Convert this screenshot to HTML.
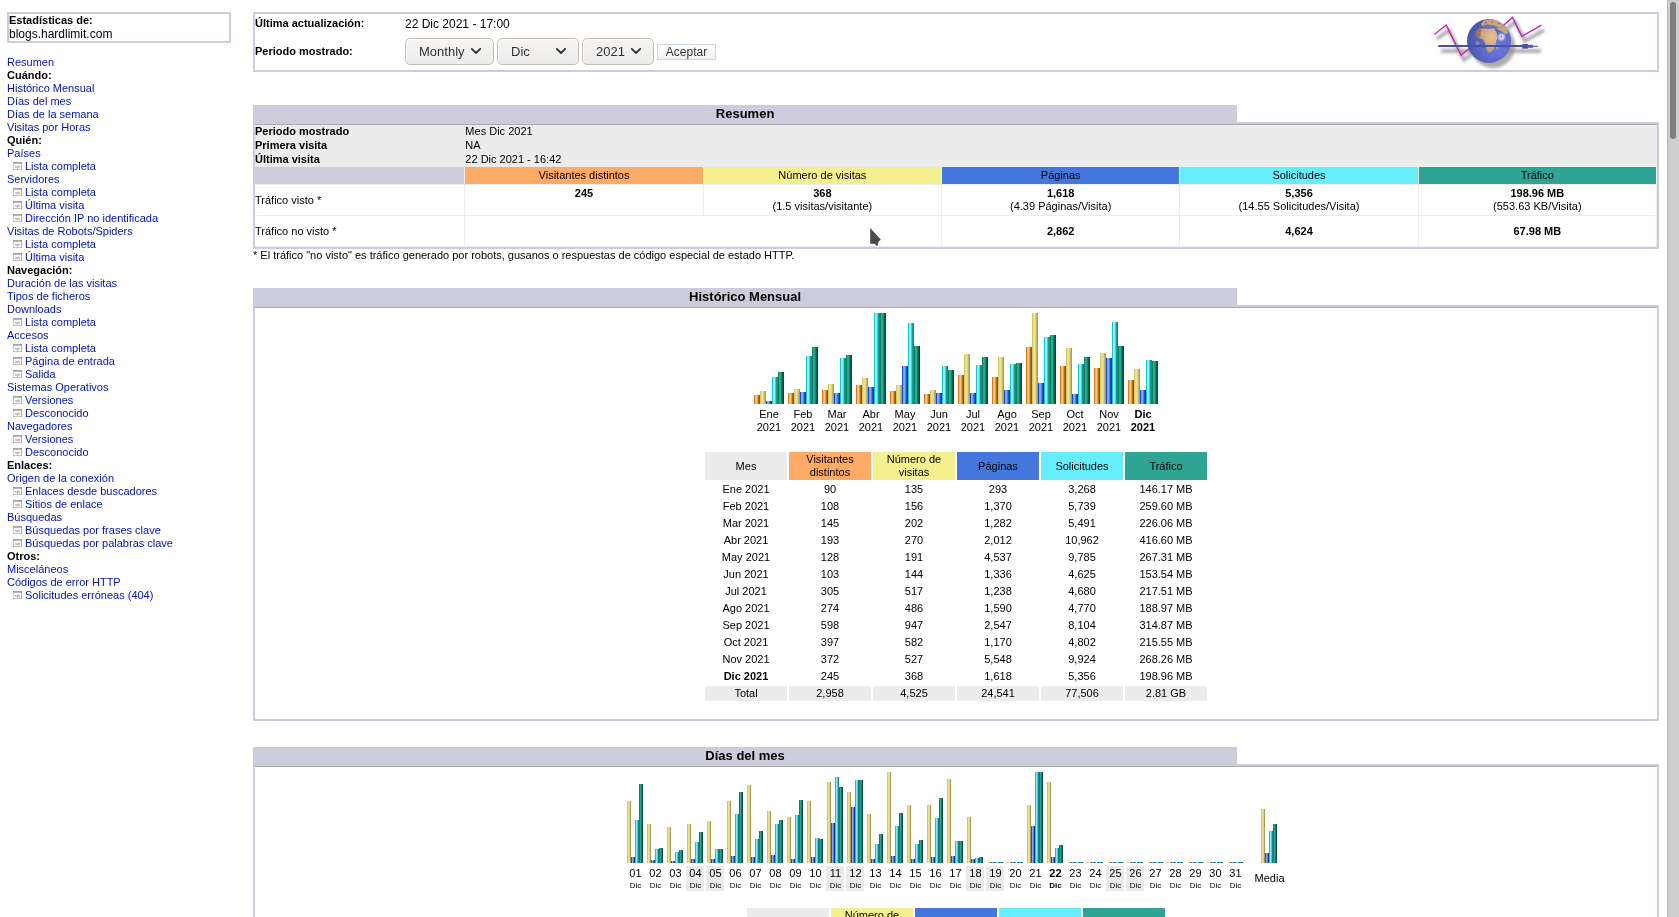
<!DOCTYPE html>
<html><head><meta charset="utf-8"><title>Estadísticas de blogs.hardlimit.com</title>
<style>
html,body{margin:0;padding:0;background:#fff;overflow:hidden;width:1679px;height:917px;font:11px/13px "Liberation Sans",sans-serif}
*{font-family:"Liberation Sans",sans-serif}
#left{position:absolute;left:0;top:0;width:239px;height:917px;overflow:hidden;will-change:transform}
#main{position:absolute;left:245px;top:0;width:1422px;height:917px;overflow:hidden;will-change:transform}
.bodyl{padding:0 8px}
#sb{position:absolute;left:1667px;top:0;width:12px;height:917px;background:#cecece;border-left:1px solid #bdb6b1;box-sizing:border-box}
#thumb{position:absolute;left:2px;top:2px;width:6px;height:137px;background:#7b7f80;border-radius:3px}
table{border-collapse:separate}
td{border-color:#ECECEC;border-left-width:0;border-right-width:1px;border-top-width:0;border-bottom-width:1px;font:11px/13px "Liberation Sans",sans-serif;text-align:center;color:#000}
td.aws{text-align:left;padding:0}
td.awsm{text-align:left;padding:0;border-width:0}
.aws_border{border-collapse:collapse;background-color:#CCCCDD;padding:1px;margin:0}
.aws_title{font:bold 13px/15px "Liberation Sans",sans-serif;background-color:#CCCCDD;text-align:center;padding:1px;color:#000}
.aws_blank{font:13px/15px "Liberation Sans",sans-serif;background-color:#FFFFFF;text-align:center;padding:1px}
.aws_data{background-color:#fff;border-top:1px solid #ababab}
a{font:11px/13px "Liberation Sans",sans-serif;color:#0011BB;text-decoration:none}
b{font-weight:bold}
i.bu,i.bv,i.bp,i.bh,i.bk{display:inline-block;vertical-align:bottom;width:6px}
.d i{width:4px!important}
i.bu{background:linear-gradient(90deg,#d87c10 0 16.6%,#f8b868 16.6% 33.3%,#f0c890 33.3% 50%,#d8a060 50% 66.6%,#b86818 66.6% 83.3%,#a05000 83.3%)}
i.bv{background:linear-gradient(90deg,#d4c858 0 16.6%,#ecdf88 16.6% 33.3%,#e8e2a0 33.3% 50%,#dcd490 50% 66.6%,#c8b860 66.6% 83.3%,#b09c48 83.3%)}
i.bp{background:linear-gradient(90deg,#1050d8 0 16.6%,#70a8f8 16.6% 33.3%,#88a8f0 33.3% 50%,#5080e0 50% 66.6%,#2050c0 66.6% 83.3%,#0838a0 83.3%)}
i.bh{background:linear-gradient(90deg,#10c8d0 0 16.6%,#78fcf8 16.6% 33.3%,#98e8ec 33.3% 50%,#58c8d0 50% 66.6%,#10a0a8 66.6% 83.3%,#088890 83.3%)}
i.bk{background:linear-gradient(90deg,#088850 0 16.6%,#20b090 16.6% 33.3%,#30a098 33.3% 50%,#188070 50% 66.6%,#006848 66.6% 83.3%,#005030 83.3%)}
tr.br td{line-height:0;font-size:0}
.sel{position:absolute;top:24px;height:27px;box-sizing:border-box;border:1px solid #c6bfb8;border-radius:5px;box-shadow:inset 1px 1px 0 #fdfdfd;background:linear-gradient(#f6f5f4,#edebe9);font:13px "Liberation Sans",sans-serif;color:#2e3436}
.sel span{position:absolute;top:5px}
.sel svg{position:absolute;top:9px}
.btn{position:absolute;left:412px;top:30px;width:59px;height:16px;box-sizing:border-box;border:1px solid #ccd7e0;background:linear-gradient(#fff,#eef1f4);font:12px "Liberation Sans",sans-serif;color:#333;text-align:center;line-height:14px}
.pg{display:inline-block;width:9px;height:8px;vertical-align:0;margin:0 3px 0 6px}
</style></head><body>

<div id="left"><div class="bodyl" style="padding-left:7px;padding-right:8px">
<div style="height:12px"></div>
<table class="aws_border" border="0" cellpadding="2" cellspacing="0" width="100%"><tr><td style="padding:2px;border:0">
<table class="aws_data" border="0" cellpadding="1" cellspacing="0" width="100%" style="border-top:0"><tr><td class="awsm"><b>Estadísticas de:</b></td></tr><tr><td class="awsm" style="line-height:14px"><span style="font-size:12px">blogs.hardlimit.com</span></td></tr></table>
</td></tr></table>
<div style="height:13px"></div>
<table width="100%" cellpadding="0" cellspacing="0" border="0">
<tr><td class="awsm" style="height:13px;line-height:13px;white-space:nowrap"><a>Resumen</a></td></tr>
<tr><td class="awsm" style="height:13px;line-height:13px;white-space:nowrap"><b>Cuándo:</b></td></tr>
<tr><td class="awsm" style="height:13px;line-height:13px;white-space:nowrap"><a>Histórico Mensual</a></td></tr>
<tr><td class="awsm" style="height:13px;line-height:13px;white-space:nowrap"><a>Días del mes</a></td></tr>
<tr><td class="awsm" style="height:13px;line-height:13px;white-space:nowrap"><a>Días de la semana</a></td></tr>
<tr><td class="awsm" style="height:13px;line-height:13px;white-space:nowrap"><a>Visitas por Horas</a></td></tr>
<tr><td class="awsm" style="height:13px;line-height:13px;white-space:nowrap"><b>Quién:</b></td></tr>
<tr><td class="awsm" style="height:13px;line-height:13px;white-space:nowrap"><a>Países</a></td></tr>
<tr><td class="awsm" style="height:13px;line-height:13px;white-space:nowrap"><svg class="pg" width="9" height="8" viewBox="0 0 9 8" shape-rendering="crispEdges"><rect x="0" y="0" width="9" height="8" fill="#fff"/><rect x="0" y="0" width="9" height="1" fill="#a4a4a4"/><rect x="0" y="1" width="9" height="1" fill="#b8b8b8"/><rect x="0" y="0" width="1" height="1" fill="#8c8c8c"/><rect x="8" y="0" width="1" height="1" fill="#8c8c8c"/><rect x="8" y="1" width="1" height="1" fill="#a0a0a0"/><rect x="0" y="2" width="1" height="5" fill="#cecece"/><rect x="8" y="2" width="1" height="5" fill="#b4b4b4"/><rect x="0" y="7" width="9" height="1" fill="#c4c4c4"/><rect x="0" y="7" width="1" height="1" fill="#a8a8a8"/><rect x="8" y="7" width="1" height="1" fill="#a0a0a0"/><rect x="5" y="3" width="1" height="1" fill="#c8c8c8"/><rect x="2" y="4" width="5" height="1" fill="#c4c4c4"/><rect x="2" y="5" width="5" height="1" fill="#c8c8c8"/><rect x="4" y="6" width="1" height="1" fill="#c8c8c8"/></svg><a>Lista completa</a></td></tr>
<tr><td class="awsm" style="height:13px;line-height:13px;white-space:nowrap"><a>Servidores</a></td></tr>
<tr><td class="awsm" style="height:13px;line-height:13px;white-space:nowrap"><svg class="pg" width="9" height="8" viewBox="0 0 9 8" shape-rendering="crispEdges"><rect x="0" y="0" width="9" height="8" fill="#fff"/><rect x="0" y="0" width="9" height="1" fill="#a4a4a4"/><rect x="0" y="1" width="9" height="1" fill="#b8b8b8"/><rect x="0" y="0" width="1" height="1" fill="#8c8c8c"/><rect x="8" y="0" width="1" height="1" fill="#8c8c8c"/><rect x="8" y="1" width="1" height="1" fill="#a0a0a0"/><rect x="0" y="2" width="1" height="5" fill="#cecece"/><rect x="8" y="2" width="1" height="5" fill="#b4b4b4"/><rect x="0" y="7" width="9" height="1" fill="#c4c4c4"/><rect x="0" y="7" width="1" height="1" fill="#a8a8a8"/><rect x="8" y="7" width="1" height="1" fill="#a0a0a0"/><rect x="5" y="3" width="1" height="1" fill="#c8c8c8"/><rect x="2" y="4" width="5" height="1" fill="#c4c4c4"/><rect x="2" y="5" width="5" height="1" fill="#c8c8c8"/><rect x="4" y="6" width="1" height="1" fill="#c8c8c8"/></svg><a>Lista completa</a></td></tr>
<tr><td class="awsm" style="height:13px;line-height:13px;white-space:nowrap"><svg class="pg" width="9" height="8" viewBox="0 0 9 8" shape-rendering="crispEdges"><rect x="0" y="0" width="9" height="8" fill="#fff"/><rect x="0" y="0" width="9" height="1" fill="#a4a4a4"/><rect x="0" y="1" width="9" height="1" fill="#b8b8b8"/><rect x="0" y="0" width="1" height="1" fill="#8c8c8c"/><rect x="8" y="0" width="1" height="1" fill="#8c8c8c"/><rect x="8" y="1" width="1" height="1" fill="#a0a0a0"/><rect x="0" y="2" width="1" height="5" fill="#cecece"/><rect x="8" y="2" width="1" height="5" fill="#b4b4b4"/><rect x="0" y="7" width="9" height="1" fill="#c4c4c4"/><rect x="0" y="7" width="1" height="1" fill="#a8a8a8"/><rect x="8" y="7" width="1" height="1" fill="#a0a0a0"/><rect x="5" y="3" width="1" height="1" fill="#c8c8c8"/><rect x="2" y="4" width="5" height="1" fill="#c4c4c4"/><rect x="2" y="5" width="5" height="1" fill="#c8c8c8"/><rect x="4" y="6" width="1" height="1" fill="#c8c8c8"/></svg><a>Última visita</a></td></tr>
<tr><td class="awsm" style="height:13px;line-height:13px;white-space:nowrap"><svg class="pg" width="9" height="8" viewBox="0 0 9 8" shape-rendering="crispEdges"><rect x="0" y="0" width="9" height="8" fill="#fff"/><rect x="0" y="0" width="9" height="1" fill="#a4a4a4"/><rect x="0" y="1" width="9" height="1" fill="#b8b8b8"/><rect x="0" y="0" width="1" height="1" fill="#8c8c8c"/><rect x="8" y="0" width="1" height="1" fill="#8c8c8c"/><rect x="8" y="1" width="1" height="1" fill="#a0a0a0"/><rect x="0" y="2" width="1" height="5" fill="#cecece"/><rect x="8" y="2" width="1" height="5" fill="#b4b4b4"/><rect x="0" y="7" width="9" height="1" fill="#c4c4c4"/><rect x="0" y="7" width="1" height="1" fill="#a8a8a8"/><rect x="8" y="7" width="1" height="1" fill="#a0a0a0"/><rect x="5" y="3" width="1" height="1" fill="#c8c8c8"/><rect x="2" y="4" width="5" height="1" fill="#c4c4c4"/><rect x="2" y="5" width="5" height="1" fill="#c8c8c8"/><rect x="4" y="6" width="1" height="1" fill="#c8c8c8"/></svg><a>Dirección IP no identificada</a></td></tr>
<tr><td class="awsm" style="height:13px;line-height:13px;white-space:nowrap"><a>Visitas de Robots/Spiders</a></td></tr>
<tr><td class="awsm" style="height:13px;line-height:13px;white-space:nowrap"><svg class="pg" width="9" height="8" viewBox="0 0 9 8" shape-rendering="crispEdges"><rect x="0" y="0" width="9" height="8" fill="#fff"/><rect x="0" y="0" width="9" height="1" fill="#a4a4a4"/><rect x="0" y="1" width="9" height="1" fill="#b8b8b8"/><rect x="0" y="0" width="1" height="1" fill="#8c8c8c"/><rect x="8" y="0" width="1" height="1" fill="#8c8c8c"/><rect x="8" y="1" width="1" height="1" fill="#a0a0a0"/><rect x="0" y="2" width="1" height="5" fill="#cecece"/><rect x="8" y="2" width="1" height="5" fill="#b4b4b4"/><rect x="0" y="7" width="9" height="1" fill="#c4c4c4"/><rect x="0" y="7" width="1" height="1" fill="#a8a8a8"/><rect x="8" y="7" width="1" height="1" fill="#a0a0a0"/><rect x="5" y="3" width="1" height="1" fill="#c8c8c8"/><rect x="2" y="4" width="5" height="1" fill="#c4c4c4"/><rect x="2" y="5" width="5" height="1" fill="#c8c8c8"/><rect x="4" y="6" width="1" height="1" fill="#c8c8c8"/></svg><a>Lista completa</a></td></tr>
<tr><td class="awsm" style="height:13px;line-height:13px;white-space:nowrap"><svg class="pg" width="9" height="8" viewBox="0 0 9 8" shape-rendering="crispEdges"><rect x="0" y="0" width="9" height="8" fill="#fff"/><rect x="0" y="0" width="9" height="1" fill="#a4a4a4"/><rect x="0" y="1" width="9" height="1" fill="#b8b8b8"/><rect x="0" y="0" width="1" height="1" fill="#8c8c8c"/><rect x="8" y="0" width="1" height="1" fill="#8c8c8c"/><rect x="8" y="1" width="1" height="1" fill="#a0a0a0"/><rect x="0" y="2" width="1" height="5" fill="#cecece"/><rect x="8" y="2" width="1" height="5" fill="#b4b4b4"/><rect x="0" y="7" width="9" height="1" fill="#c4c4c4"/><rect x="0" y="7" width="1" height="1" fill="#a8a8a8"/><rect x="8" y="7" width="1" height="1" fill="#a0a0a0"/><rect x="5" y="3" width="1" height="1" fill="#c8c8c8"/><rect x="2" y="4" width="5" height="1" fill="#c4c4c4"/><rect x="2" y="5" width="5" height="1" fill="#c8c8c8"/><rect x="4" y="6" width="1" height="1" fill="#c8c8c8"/></svg><a>Última visita</a></td></tr>
<tr><td class="awsm" style="height:13px;line-height:13px;white-space:nowrap"><b>Navegación:</b></td></tr>
<tr><td class="awsm" style="height:13px;line-height:13px;white-space:nowrap"><a>Duración de las visitas</a></td></tr>
<tr><td class="awsm" style="height:13px;line-height:13px;white-space:nowrap"><a>Tipos de ficheros</a></td></tr>
<tr><td class="awsm" style="height:13px;line-height:13px;white-space:nowrap"><a>Downloads</a></td></tr>
<tr><td class="awsm" style="height:13px;line-height:13px;white-space:nowrap"><svg class="pg" width="9" height="8" viewBox="0 0 9 8" shape-rendering="crispEdges"><rect x="0" y="0" width="9" height="8" fill="#fff"/><rect x="0" y="0" width="9" height="1" fill="#a4a4a4"/><rect x="0" y="1" width="9" height="1" fill="#b8b8b8"/><rect x="0" y="0" width="1" height="1" fill="#8c8c8c"/><rect x="8" y="0" width="1" height="1" fill="#8c8c8c"/><rect x="8" y="1" width="1" height="1" fill="#a0a0a0"/><rect x="0" y="2" width="1" height="5" fill="#cecece"/><rect x="8" y="2" width="1" height="5" fill="#b4b4b4"/><rect x="0" y="7" width="9" height="1" fill="#c4c4c4"/><rect x="0" y="7" width="1" height="1" fill="#a8a8a8"/><rect x="8" y="7" width="1" height="1" fill="#a0a0a0"/><rect x="5" y="3" width="1" height="1" fill="#c8c8c8"/><rect x="2" y="4" width="5" height="1" fill="#c4c4c4"/><rect x="2" y="5" width="5" height="1" fill="#c8c8c8"/><rect x="4" y="6" width="1" height="1" fill="#c8c8c8"/></svg><a>Lista completa</a></td></tr>
<tr><td class="awsm" style="height:13px;line-height:13px;white-space:nowrap"><a>Accesos</a></td></tr>
<tr><td class="awsm" style="height:13px;line-height:13px;white-space:nowrap"><svg class="pg" width="9" height="8" viewBox="0 0 9 8" shape-rendering="crispEdges"><rect x="0" y="0" width="9" height="8" fill="#fff"/><rect x="0" y="0" width="9" height="1" fill="#a4a4a4"/><rect x="0" y="1" width="9" height="1" fill="#b8b8b8"/><rect x="0" y="0" width="1" height="1" fill="#8c8c8c"/><rect x="8" y="0" width="1" height="1" fill="#8c8c8c"/><rect x="8" y="1" width="1" height="1" fill="#a0a0a0"/><rect x="0" y="2" width="1" height="5" fill="#cecece"/><rect x="8" y="2" width="1" height="5" fill="#b4b4b4"/><rect x="0" y="7" width="9" height="1" fill="#c4c4c4"/><rect x="0" y="7" width="1" height="1" fill="#a8a8a8"/><rect x="8" y="7" width="1" height="1" fill="#a0a0a0"/><rect x="5" y="3" width="1" height="1" fill="#c8c8c8"/><rect x="2" y="4" width="5" height="1" fill="#c4c4c4"/><rect x="2" y="5" width="5" height="1" fill="#c8c8c8"/><rect x="4" y="6" width="1" height="1" fill="#c8c8c8"/></svg><a>Lista completa</a></td></tr>
<tr><td class="awsm" style="height:13px;line-height:13px;white-space:nowrap"><svg class="pg" width="9" height="8" viewBox="0 0 9 8" shape-rendering="crispEdges"><rect x="0" y="0" width="9" height="8" fill="#fff"/><rect x="0" y="0" width="9" height="1" fill="#a4a4a4"/><rect x="0" y="1" width="9" height="1" fill="#b8b8b8"/><rect x="0" y="0" width="1" height="1" fill="#8c8c8c"/><rect x="8" y="0" width="1" height="1" fill="#8c8c8c"/><rect x="8" y="1" width="1" height="1" fill="#a0a0a0"/><rect x="0" y="2" width="1" height="5" fill="#cecece"/><rect x="8" y="2" width="1" height="5" fill="#b4b4b4"/><rect x="0" y="7" width="9" height="1" fill="#c4c4c4"/><rect x="0" y="7" width="1" height="1" fill="#a8a8a8"/><rect x="8" y="7" width="1" height="1" fill="#a0a0a0"/><rect x="5" y="3" width="1" height="1" fill="#c8c8c8"/><rect x="2" y="4" width="5" height="1" fill="#c4c4c4"/><rect x="2" y="5" width="5" height="1" fill="#c8c8c8"/><rect x="4" y="6" width="1" height="1" fill="#c8c8c8"/></svg><a>Página de entrada</a></td></tr>
<tr><td class="awsm" style="height:13px;line-height:13px;white-space:nowrap"><svg class="pg" width="9" height="8" viewBox="0 0 9 8" shape-rendering="crispEdges"><rect x="0" y="0" width="9" height="8" fill="#fff"/><rect x="0" y="0" width="9" height="1" fill="#a4a4a4"/><rect x="0" y="1" width="9" height="1" fill="#b8b8b8"/><rect x="0" y="0" width="1" height="1" fill="#8c8c8c"/><rect x="8" y="0" width="1" height="1" fill="#8c8c8c"/><rect x="8" y="1" width="1" height="1" fill="#a0a0a0"/><rect x="0" y="2" width="1" height="5" fill="#cecece"/><rect x="8" y="2" width="1" height="5" fill="#b4b4b4"/><rect x="0" y="7" width="9" height="1" fill="#c4c4c4"/><rect x="0" y="7" width="1" height="1" fill="#a8a8a8"/><rect x="8" y="7" width="1" height="1" fill="#a0a0a0"/><rect x="5" y="3" width="1" height="1" fill="#c8c8c8"/><rect x="2" y="4" width="5" height="1" fill="#c4c4c4"/><rect x="2" y="5" width="5" height="1" fill="#c8c8c8"/><rect x="4" y="6" width="1" height="1" fill="#c8c8c8"/></svg><a>Salida</a></td></tr>
<tr><td class="awsm" style="height:13px;line-height:13px;white-space:nowrap"><a>Sistemas Operativos</a></td></tr>
<tr><td class="awsm" style="height:13px;line-height:13px;white-space:nowrap"><svg class="pg" width="9" height="8" viewBox="0 0 9 8" shape-rendering="crispEdges"><rect x="0" y="0" width="9" height="8" fill="#fff"/><rect x="0" y="0" width="9" height="1" fill="#a4a4a4"/><rect x="0" y="1" width="9" height="1" fill="#b8b8b8"/><rect x="0" y="0" width="1" height="1" fill="#8c8c8c"/><rect x="8" y="0" width="1" height="1" fill="#8c8c8c"/><rect x="8" y="1" width="1" height="1" fill="#a0a0a0"/><rect x="0" y="2" width="1" height="5" fill="#cecece"/><rect x="8" y="2" width="1" height="5" fill="#b4b4b4"/><rect x="0" y="7" width="9" height="1" fill="#c4c4c4"/><rect x="0" y="7" width="1" height="1" fill="#a8a8a8"/><rect x="8" y="7" width="1" height="1" fill="#a0a0a0"/><rect x="5" y="3" width="1" height="1" fill="#c8c8c8"/><rect x="2" y="4" width="5" height="1" fill="#c4c4c4"/><rect x="2" y="5" width="5" height="1" fill="#c8c8c8"/><rect x="4" y="6" width="1" height="1" fill="#c8c8c8"/></svg><a>Versiones</a></td></tr>
<tr><td class="awsm" style="height:13px;line-height:13px;white-space:nowrap"><svg class="pg" width="9" height="8" viewBox="0 0 9 8" shape-rendering="crispEdges"><rect x="0" y="0" width="9" height="8" fill="#fff"/><rect x="0" y="0" width="9" height="1" fill="#a4a4a4"/><rect x="0" y="1" width="9" height="1" fill="#b8b8b8"/><rect x="0" y="0" width="1" height="1" fill="#8c8c8c"/><rect x="8" y="0" width="1" height="1" fill="#8c8c8c"/><rect x="8" y="1" width="1" height="1" fill="#a0a0a0"/><rect x="0" y="2" width="1" height="5" fill="#cecece"/><rect x="8" y="2" width="1" height="5" fill="#b4b4b4"/><rect x="0" y="7" width="9" height="1" fill="#c4c4c4"/><rect x="0" y="7" width="1" height="1" fill="#a8a8a8"/><rect x="8" y="7" width="1" height="1" fill="#a0a0a0"/><rect x="5" y="3" width="1" height="1" fill="#c8c8c8"/><rect x="2" y="4" width="5" height="1" fill="#c4c4c4"/><rect x="2" y="5" width="5" height="1" fill="#c8c8c8"/><rect x="4" y="6" width="1" height="1" fill="#c8c8c8"/></svg><a>Desconocido</a></td></tr>
<tr><td class="awsm" style="height:13px;line-height:13px;white-space:nowrap"><a>Navegadores</a></td></tr>
<tr><td class="awsm" style="height:13px;line-height:13px;white-space:nowrap"><svg class="pg" width="9" height="8" viewBox="0 0 9 8" shape-rendering="crispEdges"><rect x="0" y="0" width="9" height="8" fill="#fff"/><rect x="0" y="0" width="9" height="1" fill="#a4a4a4"/><rect x="0" y="1" width="9" height="1" fill="#b8b8b8"/><rect x="0" y="0" width="1" height="1" fill="#8c8c8c"/><rect x="8" y="0" width="1" height="1" fill="#8c8c8c"/><rect x="8" y="1" width="1" height="1" fill="#a0a0a0"/><rect x="0" y="2" width="1" height="5" fill="#cecece"/><rect x="8" y="2" width="1" height="5" fill="#b4b4b4"/><rect x="0" y="7" width="9" height="1" fill="#c4c4c4"/><rect x="0" y="7" width="1" height="1" fill="#a8a8a8"/><rect x="8" y="7" width="1" height="1" fill="#a0a0a0"/><rect x="5" y="3" width="1" height="1" fill="#c8c8c8"/><rect x="2" y="4" width="5" height="1" fill="#c4c4c4"/><rect x="2" y="5" width="5" height="1" fill="#c8c8c8"/><rect x="4" y="6" width="1" height="1" fill="#c8c8c8"/></svg><a>Versiones</a></td></tr>
<tr><td class="awsm" style="height:13px;line-height:13px;white-space:nowrap"><svg class="pg" width="9" height="8" viewBox="0 0 9 8" shape-rendering="crispEdges"><rect x="0" y="0" width="9" height="8" fill="#fff"/><rect x="0" y="0" width="9" height="1" fill="#a4a4a4"/><rect x="0" y="1" width="9" height="1" fill="#b8b8b8"/><rect x="0" y="0" width="1" height="1" fill="#8c8c8c"/><rect x="8" y="0" width="1" height="1" fill="#8c8c8c"/><rect x="8" y="1" width="1" height="1" fill="#a0a0a0"/><rect x="0" y="2" width="1" height="5" fill="#cecece"/><rect x="8" y="2" width="1" height="5" fill="#b4b4b4"/><rect x="0" y="7" width="9" height="1" fill="#c4c4c4"/><rect x="0" y="7" width="1" height="1" fill="#a8a8a8"/><rect x="8" y="7" width="1" height="1" fill="#a0a0a0"/><rect x="5" y="3" width="1" height="1" fill="#c8c8c8"/><rect x="2" y="4" width="5" height="1" fill="#c4c4c4"/><rect x="2" y="5" width="5" height="1" fill="#c8c8c8"/><rect x="4" y="6" width="1" height="1" fill="#c8c8c8"/></svg><a>Desconocido</a></td></tr>
<tr><td class="awsm" style="height:13px;line-height:13px;white-space:nowrap"><b>Enlaces:</b></td></tr>
<tr><td class="awsm" style="height:13px;line-height:13px;white-space:nowrap"><a>Origen de la conexión</a></td></tr>
<tr><td class="awsm" style="height:13px;line-height:13px;white-space:nowrap"><svg class="pg" width="9" height="8" viewBox="0 0 9 8" shape-rendering="crispEdges"><rect x="0" y="0" width="9" height="8" fill="#fff"/><rect x="0" y="0" width="9" height="1" fill="#a4a4a4"/><rect x="0" y="1" width="9" height="1" fill="#b8b8b8"/><rect x="0" y="0" width="1" height="1" fill="#8c8c8c"/><rect x="8" y="0" width="1" height="1" fill="#8c8c8c"/><rect x="8" y="1" width="1" height="1" fill="#a0a0a0"/><rect x="0" y="2" width="1" height="5" fill="#cecece"/><rect x="8" y="2" width="1" height="5" fill="#b4b4b4"/><rect x="0" y="7" width="9" height="1" fill="#c4c4c4"/><rect x="0" y="7" width="1" height="1" fill="#a8a8a8"/><rect x="8" y="7" width="1" height="1" fill="#a0a0a0"/><rect x="5" y="3" width="1" height="1" fill="#c8c8c8"/><rect x="2" y="4" width="5" height="1" fill="#c4c4c4"/><rect x="2" y="5" width="5" height="1" fill="#c8c8c8"/><rect x="4" y="6" width="1" height="1" fill="#c8c8c8"/></svg><a>Enlaces desde buscadores</a></td></tr>
<tr><td class="awsm" style="height:13px;line-height:13px;white-space:nowrap"><svg class="pg" width="9" height="8" viewBox="0 0 9 8" shape-rendering="crispEdges"><rect x="0" y="0" width="9" height="8" fill="#fff"/><rect x="0" y="0" width="9" height="1" fill="#a4a4a4"/><rect x="0" y="1" width="9" height="1" fill="#b8b8b8"/><rect x="0" y="0" width="1" height="1" fill="#8c8c8c"/><rect x="8" y="0" width="1" height="1" fill="#8c8c8c"/><rect x="8" y="1" width="1" height="1" fill="#a0a0a0"/><rect x="0" y="2" width="1" height="5" fill="#cecece"/><rect x="8" y="2" width="1" height="5" fill="#b4b4b4"/><rect x="0" y="7" width="9" height="1" fill="#c4c4c4"/><rect x="0" y="7" width="1" height="1" fill="#a8a8a8"/><rect x="8" y="7" width="1" height="1" fill="#a0a0a0"/><rect x="5" y="3" width="1" height="1" fill="#c8c8c8"/><rect x="2" y="4" width="5" height="1" fill="#c4c4c4"/><rect x="2" y="5" width="5" height="1" fill="#c8c8c8"/><rect x="4" y="6" width="1" height="1" fill="#c8c8c8"/></svg><a>Sitios de enlace</a></td></tr>
<tr><td class="awsm" style="height:13px;line-height:13px;white-space:nowrap"><a>Búsquedas</a></td></tr>
<tr><td class="awsm" style="height:13px;line-height:13px;white-space:nowrap"><svg class="pg" width="9" height="8" viewBox="0 0 9 8" shape-rendering="crispEdges"><rect x="0" y="0" width="9" height="8" fill="#fff"/><rect x="0" y="0" width="9" height="1" fill="#a4a4a4"/><rect x="0" y="1" width="9" height="1" fill="#b8b8b8"/><rect x="0" y="0" width="1" height="1" fill="#8c8c8c"/><rect x="8" y="0" width="1" height="1" fill="#8c8c8c"/><rect x="8" y="1" width="1" height="1" fill="#a0a0a0"/><rect x="0" y="2" width="1" height="5" fill="#cecece"/><rect x="8" y="2" width="1" height="5" fill="#b4b4b4"/><rect x="0" y="7" width="9" height="1" fill="#c4c4c4"/><rect x="0" y="7" width="1" height="1" fill="#a8a8a8"/><rect x="8" y="7" width="1" height="1" fill="#a0a0a0"/><rect x="5" y="3" width="1" height="1" fill="#c8c8c8"/><rect x="2" y="4" width="5" height="1" fill="#c4c4c4"/><rect x="2" y="5" width="5" height="1" fill="#c8c8c8"/><rect x="4" y="6" width="1" height="1" fill="#c8c8c8"/></svg><a>Búsquedas por frases clave</a></td></tr>
<tr><td class="awsm" style="height:13px;line-height:13px;white-space:nowrap"><svg class="pg" width="9" height="8" viewBox="0 0 9 8" shape-rendering="crispEdges"><rect x="0" y="0" width="9" height="8" fill="#fff"/><rect x="0" y="0" width="9" height="1" fill="#a4a4a4"/><rect x="0" y="1" width="9" height="1" fill="#b8b8b8"/><rect x="0" y="0" width="1" height="1" fill="#8c8c8c"/><rect x="8" y="0" width="1" height="1" fill="#8c8c8c"/><rect x="8" y="1" width="1" height="1" fill="#a0a0a0"/><rect x="0" y="2" width="1" height="5" fill="#cecece"/><rect x="8" y="2" width="1" height="5" fill="#b4b4b4"/><rect x="0" y="7" width="9" height="1" fill="#c4c4c4"/><rect x="0" y="7" width="1" height="1" fill="#a8a8a8"/><rect x="8" y="7" width="1" height="1" fill="#a0a0a0"/><rect x="5" y="3" width="1" height="1" fill="#c8c8c8"/><rect x="2" y="4" width="5" height="1" fill="#c4c4c4"/><rect x="2" y="5" width="5" height="1" fill="#c8c8c8"/><rect x="4" y="6" width="1" height="1" fill="#c8c8c8"/></svg><a>Búsquedas por palabras clave</a></td></tr>
<tr><td class="awsm" style="height:13px;line-height:13px;white-space:nowrap"><b>Otros:</b></td></tr>
<tr><td class="awsm" style="height:13px;line-height:13px;white-space:nowrap"><a>Misceláneos</a></td></tr>
<tr><td class="awsm" style="height:13px;line-height:13px;white-space:nowrap"><a>Códigos de error HTTP</a></td></tr>
<tr><td class="awsm" style="height:13px;line-height:13px;white-space:nowrap"><svg class="pg" width="9" height="8" viewBox="0 0 9 8" shape-rendering="crispEdges"><rect x="0" y="0" width="9" height="8" fill="#fff"/><rect x="0" y="0" width="9" height="1" fill="#a4a4a4"/><rect x="0" y="1" width="9" height="1" fill="#b8b8b8"/><rect x="0" y="0" width="1" height="1" fill="#8c8c8c"/><rect x="8" y="0" width="1" height="1" fill="#8c8c8c"/><rect x="8" y="1" width="1" height="1" fill="#a0a0a0"/><rect x="0" y="2" width="1" height="5" fill="#cecece"/><rect x="8" y="2" width="1" height="5" fill="#b4b4b4"/><rect x="0" y="7" width="9" height="1" fill="#c4c4c4"/><rect x="0" y="7" width="1" height="1" fill="#a8a8a8"/><rect x="8" y="7" width="1" height="1" fill="#a0a0a0"/><rect x="5" y="3" width="1" height="1" fill="#c8c8c8"/><rect x="2" y="4" width="5" height="1" fill="#c4c4c4"/><rect x="2" y="5" width="5" height="1" fill="#c8c8c8"/><rect x="4" y="6" width="1" height="1" fill="#c8c8c8"/></svg><a>Solicitudes erróneas (404)</a></td></tr>
</table></div></div>
<div id="main"><div class="bodyl">
<div style="height:12px"></div>
<div style="position:relative;height:60px;border:2px solid #CCCCDD;box-sizing:border-box">
<div style="position:absolute;left:0;top:3px;font:bold 11px 'Liberation Sans',sans-serif">Última actualización:</div>
<div style="position:absolute;left:150px;top:3px;font:12px 'Liberation Sans',sans-serif">22 Dic 2021 - 17:00</div>
<div style="position:absolute;left:0;top:31px;font:bold 11px 'Liberation Sans',sans-serif">Periodo mostrado:</div>
<div class="sel" style="left:150px;width:89px"><span style="left:13px">Monthly</span><span style="left:65px;top:0"><svg style="top:9px" width="11" height="7" viewBox="0 0 11 7"><path d="M0.8 0.9 L5 5 L9.2 0.9" fill="none" stroke="#2e3436" stroke-width="1.8" stroke-linecap="round" stroke-linejoin="round"/></svg></span></div>
<div class="sel" style="left:242px;width:82px"><span style="left:13px">Dic</span><svg style="left:58px" width="11" height="7" viewBox="0 0 11 7"><path d="M0.8 0.9 L5 5 L9.2 0.9" fill="none" stroke="#2e3436" stroke-width="1.8" stroke-linecap="round" stroke-linejoin="round"/></svg></div>
<div class="sel" style="left:327px;width:72px"><span style="left:13px">2021</span><svg style="left:48px" width="11" height="7" viewBox="0 0 11 7"><path d="M0.8 0.9 L5 5 L9.2 0.9" fill="none" stroke="#2e3436" stroke-width="1.8" stroke-linecap="round" stroke-linejoin="round"/></svg></div>
<div class="btn" style="left:402px">Aceptar</div>
<svg style="position:absolute;left:1170px;top:-14px" width="130" height="72" viewBox="1425 0 130 72"><defs><filter id="bl" x="-20%" y="-20%" width="140%" height="140%"><feGaussianBlur stdDeviation="1.6"/></filter><filter id="hl" x="-50%" y="-50%" width="200%" height="200%"><feGaussianBlur stdDeviation="1"/></filter><radialGradient id="gl" cx="0.68" cy="0.62" r="0.8"><stop offset="0" stop-color="#6c7ce0"/><stop offset="0.45" stop-color="#5a68c8"/><stop offset="0.85" stop-color="#4c56a8"/><stop offset="1" stop-color="#454e98"/></radialGradient><radialGradient id="ld" cx="0.75" cy="0.35" r="0.8"><stop offset="0" stop-color="#e6c494"/><stop offset="0.6" stop-color="#c9a47a"/><stop offset="1" stop-color="#a8865e"/></radialGradient><clipPath id="gc"><circle cx="1489" cy="41" r="22"/></clipPath></defs><g filter="url(#bl)" fill="none" stroke="#9a9a9a" stroke-width="3.4" opacity="0.9"><polyline points="1437,39 1449,30 1464,60 1472,54"/><polyline points="1507,29 1515,22 1525,41 1544,30"/><line x1="1441" y1="51" x2="1541" y2="51"/></g><circle cx="1493" cy="46" r="22" fill="#8a8a8a" opacity="0.7" filter="url(#bl)"/><polyline points="1434.3,34.4 1446.3,25.1 1461,55.3 1470,48" fill="none" stroke="#c81cc0" stroke-width="1.3"/><polyline points="1503,25.8 1512.5,17.4 1521.8,36.3 1541.5,25.1" fill="none" stroke="#c81cc0" stroke-width="1.3"/><circle cx="1489" cy="41" r="22" fill="url(#gl)"/><g clip-path="url(#gc)"><path d="M1475.6,35.2 L1476.5,31.5 L1478.5,28.8 L1483,28.3 L1488,28.8 L1494,28.3 L1496.4,32.3 L1497.5,37 L1496,42.2 L1495.2,46.2 L1492.9,50.3 L1488.9,53.2 L1486.5,49.7 L1484.8,42.2 L1483,39.3 L1478.5,38.1 Z" fill="url(#ld)"/><path d="M1475.6,35.2 L1476.5,31.5 L1478.5,28.8 L1481,28.5 L1480.5,36 L1478.5,38.1 Z" fill="#8a6e50" opacity="0.75"/><path d="M1480.8,24 L1484,20.5 L1490,19.2 L1497,19.8 L1503,22.5 L1507.4,27 L1508,33.5 L1505,34 L1502,31.5 L1498.7,30 L1494,27.5 L1488,27.2 L1483,26.6 Z" fill="#c9a67c"/><path d="M1483,25.2 L1488,24.6 L1494,25.4 L1499,27.2 L1497,28.6 L1491,27.4 L1485,27 Z" fill="#5868c0" opacity="0.85"/><circle cx="1486" cy="22.5" r="0.9" fill="#5868c0"/><circle cx="1492" cy="21.8" r="0.8" fill="#5868c0"/><circle cx="1499" cy="23.5" r="0.8" fill="#5868c0"/><circle cx="1502.5" cy="26" r="0.7" fill="#5868c0"/><ellipse cx="1497.2" cy="47.5" rx="1" ry="1.8" fill="#c0a07a"/><ellipse cx="1477.5" cy="43.5" rx="2.2" ry="2" fill="#9a9cb8" opacity="0.6"/><circle cx="1501.5" cy="37" r="3.2" fill="#f4f6ff" opacity="0.9" filter="url(#hl)"/><path d="M1500.8,35.3 L1502.4,37 L1501.6,37.2 L1501.6,38.3 L1500.8,37.6 Z" fill="#555" opacity="0.85"/></g><line x1="1438.2" y1="46" x2="1533" y2="46" stroke="#4650a8" stroke-width="1.8"/><line x1="1533" y1="46.3" x2="1538" y2="46.3" stroke="#4650a8" stroke-width="1.1"/><rect x="1522.2" y="44" width="5.8" height="4.6" fill="#4650a8"/><rect x="1528" y="44.8" width="5" height="3" fill="#5058b0"/></svg>
</div>
<div style="height:33px"></div>
<table class="aws_border" border="0" cellpadding="2" cellspacing="0" width="100%"><tr><td class="aws_title" width="70%">Resumen </td><td class="aws_blank">&nbsp;</td></tr><tr><td colspan="2" style="padding:2px">
<table class="aws_data" border="1" cellpadding="2" cellspacing="0" width="100%" style="border-width:1px 0 0 0;border-style:solid;border-color:#ababab">
<tr bgcolor="#ECECEC"><td class="aws"><b>Periodo mostrado</b></td><td class="aws" colspan="5">Mes Dic 2021</td></tr>
<tr bgcolor="#ECECEC"><td class="aws"><b>Primera visita</b></td><td class="aws" colspan="5">NA</td></tr>
<tr bgcolor="#ECECEC"><td class="aws"><b>Última visita</b></td><td class="aws" colspan="5">22 Dic 2021 - 16:42</td></tr>
<tr><td bgcolor="#CCCCDD">&nbsp;</td><td width="17%" bgcolor="#FFAA66">Visitantes distintos</td><td width="17%" bgcolor="#F4F090">Número de visitas</td><td width="17%" bgcolor="#4477DD">Páginas</td><td width="17%" bgcolor="#66EEFF">Solicitudes</td><td width="17%" bgcolor="#2EA495">Tráfico</td></tr>
<tr><td class="aws">Tráfico visto *</td><td><b>245</b><br>&nbsp;</td><td><b>368</b><br>(1.5&nbsp;visitas/visitante)</td><td><b>1,618</b><br>(4.39&nbsp;Páginas/Visita)</td><td><b>5,356</b><br>(14.55&nbsp;Solicitudes/Visita)</td><td><b>198.96 MB</b><br>(553.63&nbsp;KB/Visita)</td></tr>
<tr><td class="aws">Tráfico no visto *</td><td colspan="2">&nbsp;<br>&nbsp;</td><td><b>2,862</b></td><td><b>4,624</b></td><td><b>67.98 MB</b></td></tr>
</table></td></tr></table>
<span style="font:11px 'Liberation Sans',sans-serif">* El tráfico "no visto" es tráfico generado por robots, gusanos o respuestas de código especial de estado HTTP.</span><br>
<div style="height:26px"></div>
<table class="aws_border" border="0" cellpadding="2" cellspacing="0" width="100%"><tr><td class="aws_title" width="70%">Histórico Mensual </td><td class="aws_blank">&nbsp;</td></tr><tr><td colspan="2" style="padding:2px">
<table class="aws_data" border="0" cellpadding="2" cellspacing="0" width="100%"><tr><td align="center">
<table style="margin:0 auto"><tr valign="bottom" class="br"><td style="font-size:11px;line-height:13px">&nbsp;</td>
<td><i class="bu" style="height:9px"></i><i class="bv" style="height:13px"></i><i class="bp" style="height:3px"></i><i class="bh" style="height:27px"></i><i class="bk" style="height:32px"></i></td>
<td><i class="bu" style="height:11px"></i><i class="bv" style="height:15px"></i><i class="bp" style="height:12px"></i><i class="bh" style="height:48px"></i><i class="bk" style="height:57px"></i></td>
<td><i class="bu" style="height:14px"></i><i class="bv" style="height:20px"></i><i class="bp" style="height:11px"></i><i class="bh" style="height:46px"></i><i class="bk" style="height:49px"></i></td>
<td><i class="bu" style="height:19px"></i><i class="bv" style="height:26px"></i><i class="bp" style="height:17px"></i><i class="bh" style="height:91px"></i><i class="bk" style="height:91px"></i></td>
<td><i class="bu" style="height:13px"></i><i class="bv" style="height:19px"></i><i class="bp" style="height:38px"></i><i class="bh" style="height:81px"></i><i class="bk" style="height:58px"></i></td>
<td><i class="bu" style="height:10px"></i><i class="bv" style="height:14px"></i><i class="bp" style="height:11px"></i><i class="bh" style="height:38px"></i><i class="bk" style="height:34px"></i></td>
<td><i class="bu" style="height:29px"></i><i class="bv" style="height:50px"></i><i class="bp" style="height:11px"></i><i class="bh" style="height:39px"></i><i class="bk" style="height:47px"></i></td>
<td><i class="bu" style="height:27px"></i><i class="bv" style="height:47px"></i><i class="bp" style="height:14px"></i><i class="bh" style="height:40px"></i><i class="bk" style="height:41px"></i></td>
<td><i class="bu" style="height:57px"></i><i class="bv" style="height:91px"></i><i class="bp" style="height:21px"></i><i class="bh" style="height:67px"></i><i class="bk" style="height:69px"></i></td>
<td><i class="bu" style="height:38px"></i><i class="bv" style="height:56px"></i><i class="bp" style="height:10px"></i><i class="bh" style="height:40px"></i><i class="bk" style="height:47px"></i></td>
<td><i class="bu" style="height:36px"></i><i class="bv" style="height:51px"></i><i class="bp" style="height:46px"></i><i class="bh" style="height:82px"></i><i class="bk" style="height:58px"></i></td>
<td><i class="bu" style="height:24px"></i><i class="bv" style="height:35px"></i><i class="bp" style="height:14px"></i><i class="bh" style="height:44px"></i><i class="bk" style="height:43px"></i></td>
<td style="font-size:11px;line-height:13px">&nbsp;</td></tr>
<tr valign="middle"><td>&nbsp;</td>
<td>Ene<br>2021</td>
<td>Feb<br>2021</td>
<td>Mar<br>2021</td>
<td>Abr<br>2021</td>
<td>May<br>2021</td>
<td>Jun<br>2021</td>
<td>Jul<br>2021</td>
<td>Ago<br>2021</td>
<td>Sep<br>2021</td>
<td>Oct<br>2021</td>
<td>Nov<br>2021</td>
<td><b>Dic<br>2021</b></td>
<td>&nbsp;</td></tr></table>
<br>
<table style="margin:0 auto"><tr><td width="80" bgcolor="#ECECEC">Mes</td><td width="80" bgcolor="#FFAA66">Visitantes distintos</td><td width="80" bgcolor="#F4F090">Número de visitas</td><td width="80" bgcolor="#4477DD">Páginas</td><td width="80" bgcolor="#66EEFF">Solicitudes</td><td width="80" bgcolor="#2EA495">Tráfico</td></tr>
<tr><td>Ene 2021</td><td>90</td><td>135</td><td>293</td><td>3,268</td><td>146.17 MB</td></tr>
<tr><td>Feb 2021</td><td>108</td><td>156</td><td>1,370</td><td>5,739</td><td>259.60 MB</td></tr>
<tr><td>Mar 2021</td><td>145</td><td>202</td><td>1,282</td><td>5,491</td><td>226.06 MB</td></tr>
<tr><td>Abr 2021</td><td>193</td><td>270</td><td>2,012</td><td>10,962</td><td>416.60 MB</td></tr>
<tr><td>May 2021</td><td>128</td><td>191</td><td>4,537</td><td>9,785</td><td>267.31 MB</td></tr>
<tr><td>Jun 2021</td><td>103</td><td>144</td><td>1,336</td><td>4,625</td><td>153.54 MB</td></tr>
<tr><td>Jul 2021</td><td>305</td><td>517</td><td>1,238</td><td>4,680</td><td>217.51 MB</td></tr>
<tr><td>Ago 2021</td><td>274</td><td>486</td><td>1,590</td><td>4,770</td><td>188.97 MB</td></tr>
<tr><td>Sep 2021</td><td>598</td><td>947</td><td>2,547</td><td>8,104</td><td>314.87 MB</td></tr>
<tr><td>Oct 2021</td><td>397</td><td>582</td><td>1,170</td><td>4,802</td><td>215.55 MB</td></tr>
<tr><td>Nov 2021</td><td>372</td><td>527</td><td>5,548</td><td>9,924</td><td>268.26 MB</td></tr>
<tr><td><b>Dic 2021</b></td><td>245</td><td>368</td><td>1,618</td><td>5,356</td><td>198.96 MB</td></tr>
<tr><td bgcolor="#ECECEC">Total</td><td bgcolor="#ECECEC">2,958</td><td bgcolor="#ECECEC">4,525</td><td bgcolor="#ECECEC">24,541</td><td bgcolor="#ECECEC">77,506</td><td bgcolor="#ECECEC">2.81 GB</td></tr></table>
<br><div style="height:1px"></div>
</td></tr></table></td></tr></table><br>
<div style="height:13px"></div>
<table class="aws_border" border="0" cellpadding="2" cellspacing="0" width="100%"><tr><td class="aws_title" width="70%">Días del mes </td><td class="aws_blank">&nbsp;</td></tr><tr><td colspan="2" style="padding:2px">
<table class="aws_data" border="0" cellpadding="2" cellspacing="0" width="100%"><tr><td align="center">
<table style="margin:0 auto" class="d"><tr valign="bottom" class="br">
<td><i class="bv" style="height:62px"></i><i class="bp" style="height:6px"></i><i class="bh" style="height:43px"></i><i class="bk" style="height:79px"></i></td>
<td><i class="bv" style="height:39px"></i><i class="bp" style="height:3px"></i><i class="bh" style="height:14px"></i><i class="bk" style="height:15px"></i></td>
<td><i class="bv" style="height:36px"></i><i class="bp" style="height:2px"></i><i class="bh" style="height:11px"></i><i class="bk" style="height:13px"></i></td>
<td><i class="bv" style="height:39px"></i><i class="bp" style="height:4px"></i><i class="bh" style="height:21px"></i><i class="bk" style="height:31px"></i></td>
<td><i class="bv" style="height:42px"></i><i class="bp" style="height:4px"></i><i class="bh" style="height:14px"></i><i class="bk" style="height:14px"></i></td>
<td><i class="bv" style="height:62px"></i><i class="bp" style="height:7px"></i><i class="bh" style="height:49px"></i><i class="bk" style="height:71px"></i></td>
<td><i class="bv" style="height:78px"></i><i class="bp" style="height:6px"></i><i class="bh" style="height:24px"></i><i class="bk" style="height:32px"></i></td>
<td><i class="bv" style="height:52px"></i><i class="bp" style="height:8px"></i><i class="bh" style="height:39px"></i><i class="bk" style="height:43px"></i></td>
<td><i class="bv" style="height:46px"></i><i class="bp" style="height:4px"></i><i class="bh" style="height:48px"></i><i class="bk" style="height:63px"></i></td>
<td><i class="bv" style="height:62px"></i><i class="bp" style="height:6px"></i><i class="bh" style="height:25px"></i><i class="bk" style="height:24px"></i></td>
<td><i class="bv" style="height:81px"></i><i class="bp" style="height:40px"></i><i class="bh" style="height:86px"></i><i class="bk" style="height:76px"></i></td>
<td><i class="bv" style="height:71px"></i><i class="bp" style="height:56px"></i><i class="bh" style="height:83px"></i><i class="bk" style="height:83px"></i></td>
<td><i class="bv" style="height:49px"></i><i class="bp" style="height:4px"></i><i class="bh" style="height:19px"></i><i class="bk" style="height:29px"></i></td>
<td><i class="bv" style="height:91px"></i><i class="bp" style="height:7px"></i><i class="bh" style="height:37px"></i><i class="bk" style="height:50px"></i></td>
<td><i class="bv" style="height:58px"></i><i class="bp" style="height:4px"></i><i class="bh" style="height:19px"></i><i class="bk" style="height:23px"></i></td>
<td><i class="bv" style="height:58px"></i><i class="bp" style="height:6px"></i><i class="bh" style="height:45px"></i><i class="bk" style="height:65px"></i></td>
<td><i class="bv" style="height:84px"></i><i class="bp" style="height:7px"></i><i class="bh" style="height:22px"></i><i class="bk" style="height:22px"></i></td>
<td><i class="bv" style="height:46px"></i><i class="bp" style="height:4px"></i><i class="bh" style="height:5px"></i><i class="bk" style="height:6px"></i></td>
<td><i class="bv" style="height:1px"></i><i class="bp" style="height:1px"></i><i class="bh" style="height:1px"></i><i class="bk" style="height:1px"></i></td>
<td><i class="bv" style="height:1px"></i><i class="bp" style="height:1px"></i><i class="bh" style="height:1px"></i><i class="bk" style="height:1px"></i></td>
<td><i class="bv" style="height:58px"></i><i class="bp" style="height:37px"></i><i class="bh" style="height:91px"></i><i class="bk" style="height:91px"></i></td>
<td><i class="bv" style="height:81px"></i><i class="bp" style="height:6px"></i><i class="bh" style="height:15px"></i><i class="bk" style="height:18px"></i></td>
<td><i class="bv" style="height:1px"></i><i class="bp" style="height:1px"></i><i class="bh" style="height:1px"></i><i class="bk" style="height:1px"></i></td>
<td><i class="bv" style="height:1px"></i><i class="bp" style="height:1px"></i><i class="bh" style="height:1px"></i><i class="bk" style="height:1px"></i></td>
<td><i class="bv" style="height:1px"></i><i class="bp" style="height:1px"></i><i class="bh" style="height:1px"></i><i class="bk" style="height:1px"></i></td>
<td><i class="bv" style="height:1px"></i><i class="bp" style="height:1px"></i><i class="bh" style="height:1px"></i><i class="bk" style="height:1px"></i></td>
<td><i class="bv" style="height:1px"></i><i class="bp" style="height:1px"></i><i class="bh" style="height:1px"></i><i class="bk" style="height:1px"></i></td>
<td><i class="bv" style="height:1px"></i><i class="bp" style="height:1px"></i><i class="bh" style="height:1px"></i><i class="bk" style="height:1px"></i></td>
<td><i class="bv" style="height:1px"></i><i class="bp" style="height:1px"></i><i class="bh" style="height:1px"></i><i class="bk" style="height:1px"></i></td>
<td><i class="bv" style="height:1px"></i><i class="bp" style="height:1px"></i><i class="bh" style="height:1px"></i><i class="bk" style="height:1px"></i></td>
<td><i class="bv" style="height:1px"></i><i class="bp" style="height:1px"></i><i class="bh" style="height:1px"></i><i class="bk" style="height:1px"></i></td>
<td style="font-size:11px">&nbsp;</td>
<td><span style="margin-left:-1px"></span><i class="bv" style="height:54px"></i><i class="bp" style="height:10px"></i><i class="bh" style="height:32px"></i><i class="bk" style="height:39px"></i></td>
</tr><tr valign="middle">
<td><div>01</div><div style="font-size:8px;line-height:9px;padding-top:1px">Dic</div></td>
<td><div>02</div><div style="font-size:8px;line-height:9px;padding-top:1px">Dic</div></td>
<td><div>03</div><div style="font-size:8px;line-height:9px;padding-top:1px">Dic</div></td>
<td bgcolor="#EAEAEA"><div>04</div><div style="font-size:8px;line-height:9px;padding-top:1px">Dic</div></td>
<td bgcolor="#EAEAEA"><div>05</div><div style="font-size:8px;line-height:9px;padding-top:1px">Dic</div></td>
<td><div>06</div><div style="font-size:8px;line-height:9px;padding-top:1px">Dic</div></td>
<td><div>07</div><div style="font-size:8px;line-height:9px;padding-top:1px">Dic</div></td>
<td><div>08</div><div style="font-size:8px;line-height:9px;padding-top:1px">Dic</div></td>
<td><div>09</div><div style="font-size:8px;line-height:9px;padding-top:1px">Dic</div></td>
<td><div>10</div><div style="font-size:8px;line-height:9px;padding-top:1px">Dic</div></td>
<td bgcolor="#EAEAEA"><div>11</div><div style="font-size:8px;line-height:9px;padding-top:1px">Dic</div></td>
<td bgcolor="#EAEAEA"><div>12</div><div style="font-size:8px;line-height:9px;padding-top:1px">Dic</div></td>
<td><div>13</div><div style="font-size:8px;line-height:9px;padding-top:1px">Dic</div></td>
<td><div>14</div><div style="font-size:8px;line-height:9px;padding-top:1px">Dic</div></td>
<td><div>15</div><div style="font-size:8px;line-height:9px;padding-top:1px">Dic</div></td>
<td><div>16</div><div style="font-size:8px;line-height:9px;padding-top:1px">Dic</div></td>
<td><div>17</div><div style="font-size:8px;line-height:9px;padding-top:1px">Dic</div></td>
<td bgcolor="#EAEAEA"><div>18</div><div style="font-size:8px;line-height:9px;padding-top:1px">Dic</div></td>
<td bgcolor="#EAEAEA"><div>19</div><div style="font-size:8px;line-height:9px;padding-top:1px">Dic</div></td>
<td><div>20</div><div style="font-size:8px;line-height:9px;padding-top:1px">Dic</div></td>
<td><div>21</div><div style="font-size:8px;line-height:9px;padding-top:1px">Dic</div></td>
<td><b><div>22</div><div style="font-size:8px;line-height:9px;padding-top:1px">Dic</div></b></td>
<td><div>23</div><div style="font-size:8px;line-height:9px;padding-top:1px">Dic</div></td>
<td><div>24</div><div style="font-size:8px;line-height:9px;padding-top:1px">Dic</div></td>
<td bgcolor="#EAEAEA"><div>25</div><div style="font-size:8px;line-height:9px;padding-top:1px">Dic</div></td>
<td bgcolor="#EAEAEA"><div>26</div><div style="font-size:8px;line-height:9px;padding-top:1px">Dic</div></td>
<td><div>27</div><div style="font-size:8px;line-height:9px;padding-top:1px">Dic</div></td>
<td><div>28</div><div style="font-size:8px;line-height:9px;padding-top:1px">Dic</div></td>
<td><div>29</div><div style="font-size:8px;line-height:9px;padding-top:1px">Dic</div></td>
<td><div>30</div><div style="font-size:8px;line-height:9px;padding-top:1px">Dic</div></td>
<td><div>31</div><div style="font-size:8px;line-height:9px;padding-top:1px">Dic</div></td>
<td>&nbsp;</td><td>Media</td></tr></table>
<br>
<table style="margin:0 auto"><tr><td width="80" bgcolor="#ECECEC">Día</td><td width="80" bgcolor="#F4F090">Número de visitas</td><td width="80" bgcolor="#4477DD">Páginas</td><td width="80" bgcolor="#66EEFF">Solicitudes</td><td width="80" bgcolor="#2EA495">Tráfico</td></tr></table>
</td></tr></table></td></tr></table>
</div></div>
<div id="sb"><div id="thumb"></div></div>
<svg style="position:absolute;left:860px;top:220px" width="30" height="35" viewBox="860 220 30 35"><defs><filter id="cs" x="-50%" y="-50%" width="200%" height="200%"><feGaussianBlur stdDeviation="0.8"/></filter></defs><path d="M870.2,228 L880.8,239.4 L878.5,241.8 L877.3,246.4 L874.5,243.7 L870.2,243.7 Z" fill="none" stroke="#000" stroke-opacity="0.08" stroke-width="3" filter="url(#cs)" transform="translate(0.5,0.8)"/><path d="M870.2,228 L880.8,239.4 L878.5,241.8 L877.3,246.4 L874.5,243.7 L870.2,243.7 Z" fill="#fff" stroke="#fff" stroke-width="2.2" stroke-linejoin="round"/><path d="M870.2,228 L880.8,239.4 L878.5,241.8 L877.3,246.4 L874.5,243.7 L870.2,243.7 Z" fill="#4a4a4a"/></svg>
</body></html>
